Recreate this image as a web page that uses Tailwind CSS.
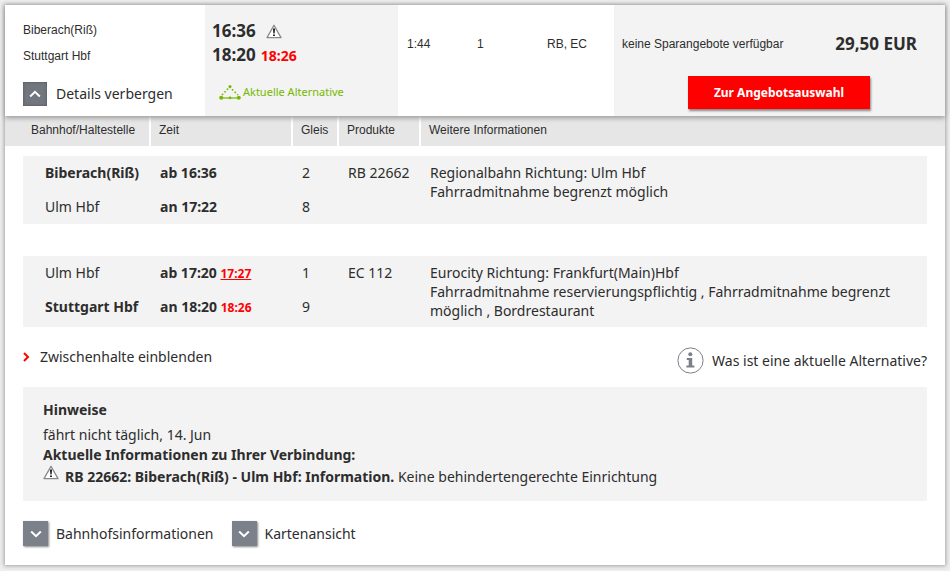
<!DOCTYPE html>
<html lang="de">
<head>
    <meta charset="UTF-8">
    <meta name="viewport" content="width=device-width, initial-scale=1.0">
    <title>Verbindung Biberach(Riß) - Stuttgart Hbf</title>
    <script src="https://cdn.jsdelivr.net/npm/@tailwindcss/browser@4"></script>
</head>
<body class="bg-[#eeeeee] p-[5px] font-['Noto_Sans',sans-serif] text-sm text-[#2d2d2d]">
    <!-- Icons -->
    <svg class="hidden">
        <symbol id="warning" viewBox="0 0 16 15">
            <path d="M8 1.2 15 13.6H1Z" fill="#fff" stroke="#85878f" stroke-width="1.3" stroke-linejoin="round"/>
            <path d="M7 4.5h2L8.6 9.6H7.4ZM7.1 10.4h1.8v1.7H7.1Z" fill="#111"/>
        </symbol>
        <symbol id="chevron" viewBox="0 0 12 8">
            <path d="M1.2 1.5 6 6.2l4.8-4.7" fill="none" stroke="#fff" stroke-width="2"/>
        </symbol>
    </svg>

    <main class="bg-white shadow-[0_0_4px_1px_#a3a3a3]">
        <!-- Summary -->
        <section class="relative flex h-[111px] shadow-[0_2px_5px_#999]">
            <div class="w-[200px] shrink-0 pt-3 pl-[18px]">
                <div class="font-['Liberation_Sans',sans-serif] text-xs leading-[26px]">
                    <p>Biberach(Riß)</p>
                    <p>Stuttgart Hbf</p>
                </div>
                <button type="button" class="mt-[13px] flex items-center gap-[9px]">
                    <span class="flex size-6 items-center justify-center bg-[#72767f] shadow-[inset_0_0_3px_#50545c]">
                        <svg class="h-2 w-3 rotate-180"><use href="#chevron"/></svg>
                    </span>
                    Details verbergen
                </button>
            </div>
            <div class="w-[193px] shrink-0 bg-[#f3f3f3] pt-[14px] pl-[7px]">
                <div class="flex items-center gap-[10px] text-[17px] leading-6 font-bold">
                    16:36
                    <svg class="h-[15px] w-4"><use href="#warning"/></svg>
                </div>
                <div class="flex items-baseline gap-[5px] text-[17px] leading-6 font-bold">
                    18:20 <span class="text-sm">
                        <span class="text-[#ff0000]">18:26</span>
                    </span>
                </div>
                <a href="#" class="mt-4 ml-[7px] flex items-center gap-[2px] text-[11px] leading-[18px] text-[#76b800]">
                    <svg class="h-4 w-[22px]" viewBox="0 0 22 16" fill="#76b800">
                        <path d="M2 14h18" stroke="#76b800" stroke-width="1.2"/>
                        <path d="M3 11 10.5 3 19 11" fill="none" stroke="#76b800" stroke-width="1.6" stroke-dasharray="1.6 2"/>
                        <circle cx="2.2" cy="13.8" r="2"/>
                        <circle cx="19.8" cy="13.8" r="2"/>
                        <circle cx="11" cy="13.8" r="1.4"/>
                        <circle cx="11" cy="2.5" r="1.5"/>
                    </svg>
                    Aktuelle Alternative
                </a>
            </div>
            <div class="flex w-[216px] shrink-0 pt-8 pl-[9px] font-['Liberation_Sans',sans-serif] text-xs leading-[14px]">
                <span class="w-[70px]">1:44</span>
                <span class="w-[70px]">1</span>
                <span>RB, EC</span>
            </div>
            <div class="min-w-0 flex-1 bg-[#f3f3f3] pt-7 pl-2">
                <div class="flex items-center justify-between pr-7">
                    <span class="font-['Liberation_Sans',sans-serif] text-xs">keine Sparangebote verfügbar</span>
                    <strong class="text-[17px] leading-[22px]">29,50 EUR</strong>
                </div>
                <button type="button" class="mt-[21px] mr-[75px] ml-auto block h-[33px] w-[182px] bg-[#ff0000] text-xs font-bold text-white shadow-[1px_2px_2px_#888]">Zur Angebotsauswahl</button>
            </div>
        </section>

        <!-- Train details -->
        <table class="w-full table-fixed border-collapse text-left">
            <colgroup>
                <col class="w-[18px]">
                <col class="w-[127px]">
                <col class="w-[142px]">
                <col class="w-[46px]">
                <col class="w-[82px]">
                <col>
                <col class="w-[18px]">
            </colgroup>
            <thead>
                <tr class="h-[30px] bg-[#e6e6e6] font-['Liberation_Sans',sans-serif] text-xs *:pb-[2px] *:pl-2 *:font-normal">
                    <td></td>
                    <th scope="col">Bahnhof/Haltestelle</th>
                    <th scope="col" class="border-l-2 border-white">Zeit</th>
                    <th scope="col" class="border-l-2 border-white">Gleis</th>
                    <th scope="col" class="border-l-2 border-white">Produkte</th>
                    <th scope="col" class="border-l-2 border-white">Weitere Informationen</th>
                    <td></td>
                </tr>
            </thead>
            <tbody class="align-top leading-[19px]">
                <tr class="h-[10px]"><td colspan="7"></td></tr>
                <tr class="h-[34px] *:py-[7px]">
                    <td rowspan="2"></td>
                    <td class="bg-[#f3f3f3] pl-[22px] font-bold">Biberach(Riß)</td>
                    <td class="bg-[#f3f3f3] pl-[10px] font-bold">ab 16:36</td>
                    <td class="bg-[#f3f3f3] pl-[10px]">2</td>
                    <td class="bg-[#f3f3f3] pl-[10px] whitespace-nowrap">RB 22662</td>
                    <td rowspan="2" class="bg-[#f3f3f3] pr-2 pl-[10px]">Regionalbahn Richtung: Ulm Hbf<br>Fahrradmitnahme begrenzt möglich</td>
                    <td rowspan="2"></td>
                </tr>
                <tr class="h-[34px] bg-[#f3f3f3] *:py-[7px]">
                    <td class="pl-[22px]">Ulm Hbf</td>
                    <td class="pl-[10px] font-bold">an 17:22</td>
                    <td class="pl-[10px]">8</td>
                    <td></td>
                </tr>
                <tr class="h-8"><td colspan="7"></td></tr>
                <tr class="h-[34px] *:py-[7px]">
                    <td rowspan="2"></td>
                    <td class="bg-[#f3f3f3] pl-[22px]">Ulm Hbf</td>
                    <td class="bg-[#f3f3f3] pl-[10px] font-bold">ab 17:20 <a href="#" class="text-xs text-[#ff0000] underline">17:27</a></td>
                    <td class="bg-[#f3f3f3] pl-[10px]">1</td>
                    <td class="bg-[#f3f3f3] pl-[10px]">EC 112</td>
                    <td rowspan="2" class="bg-[#f3f3f3] pr-2 pl-[10px]">Eurocity Richtung: Frankfurt(Main)Hbf<br>Fahrradmitnahme reservierungspflichtig , Fahrradmitnahme begrenzt möglich , Bordrestaurant</td>
                    <td rowspan="2"></td>
                </tr>
                <tr class="bg-[#f3f3f3] *:py-[7px]">
                    <td class="pl-[22px] font-bold">Stuttgart Hbf</td>
                    <td class="pl-[10px] font-bold">an 18:20 <span class="text-xs text-[#ff0000]">18:26</span></td>
                    <td class="pl-[10px]">9</td>
                    <td></td>
                </tr>
            </tbody>
        </table>

        <div class="px-[18px] pb-[19px]">
            <div class="flex items-start justify-between pt-5">
                <a href="#" class="flex items-center gap-[10px]">
                    <svg class="h-[10px] w-[7px]" viewBox="0 0 7 10" fill="none" stroke="#ff0000" stroke-width="2"><path d="M1 1l4 4-4 4"/></svg>
                    Zwischenhalte einblenden
                </a>
                <a href="#" class="flex items-center gap-2">
                    <svg class="size-[27px]" viewBox="0 0 27 27" fill="#7b7f88">
                        <circle cx="13.5" cy="13.5" r="12.6" fill="#fff" stroke="#7b7f88"/>
                        <circle cx="13.3" cy="7.3" r="2"/>
                        <path d="M9.8 11h5.4v7.6h2.2v1.9H9.4v-1.9h2.3V13H9.8Z"/>
                    </svg>
                    Was ist eine aktuelle Alternative?
                </a>
            </div>

            <!-- Notes -->
            <section class="mt-[13px] bg-[#f3f3f3] px-5 pt-[13px] pb-[14px] leading-5">
                <h2 class="mb-[5px] font-bold">Hinweise</h2>
                <p>fährt nicht täglich, 14. Jun</p>
                <p class="font-bold">Aktuelle Informationen zu Ihrer Verbindung:</p>
                <div class="flex items-start gap-[6px]">
                    <svg class="h-[15px] w-4 shrink-0"><use href="#warning"/></svg>
                    <p class="pt-[2px]"><strong>RB 22662: Biberach(Riß) - Ulm Hbf: Information.</strong> Keine behindertengerechte Einrichtung</p>
                </div>
            </section>

            <div class="mt-5 flex gap-[18px]">
                <button type="button" class="flex items-center gap-2">
                    <span class="flex size-[25px] items-center justify-center bg-[#7c808a] shadow-[1px_1px_2px_#888]">
                        <svg class="h-2 w-3"><use href="#chevron"/></svg>
                    </span>
                    Bahnhofsinformationen
                </button>
                <button type="button" class="flex items-center gap-2">
                    <span class="flex size-[25px] items-center justify-center bg-[#7c808a] shadow-[1px_1px_2px_#888]">
                        <svg class="h-2 w-3"><use href="#chevron"/></svg>
                    </span>
                    Kartenansicht
                </button>
            </div>
        </div>
    </main>
</body>
</html>
